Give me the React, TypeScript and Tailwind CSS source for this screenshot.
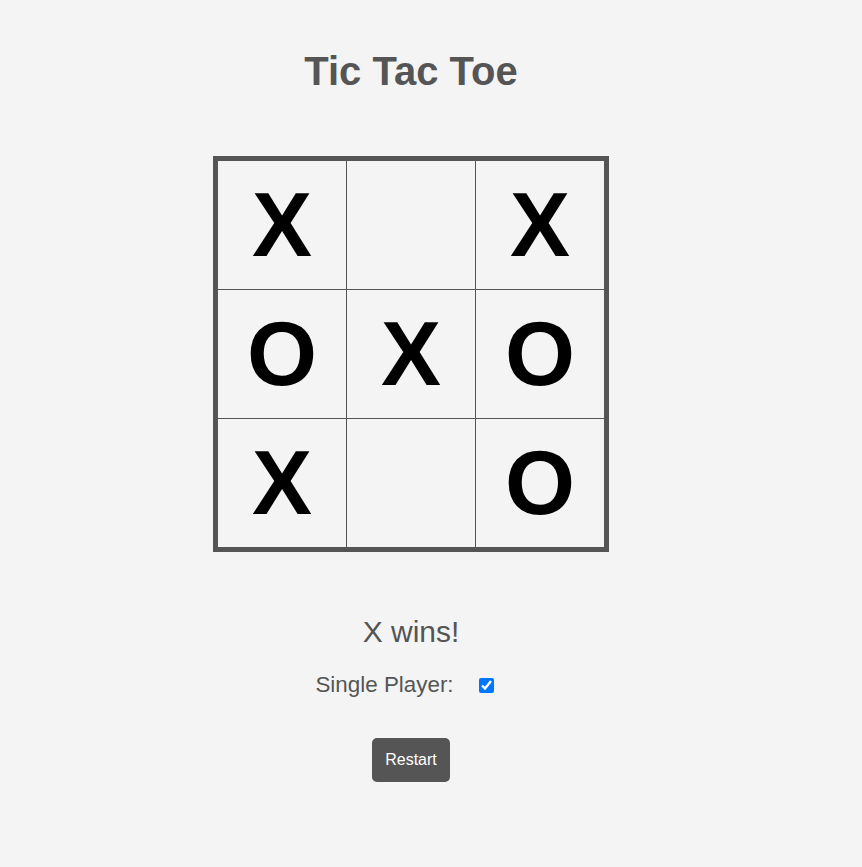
import { useState } from "react";

const initialBoard = ["X", "", "X", "O", "X", "O", "X", "", "O"];

export default function App() {
  const [board] = useState(initialBoard);
  const [single, setSingle] = useState(true);

  return (
    <div className="min-h-screen w-full bg-[#f4f4f4] font-['Liberation_Sans',Arial,sans-serif] text-[#555]">
      <div className="w-[822px] flex flex-col items-center pt-[49px]">
        <h1 className="text-[40px] leading-[45px] font-bold">Tic Tac Toe</h1>

        <div className="mt-[62px] border-[5px] border-[#555] bg-[#555]">
          <div className="grid grid-cols-[repeat(3,128px)] grid-rows-[repeat(3,128px)] gap-px">
            {board.map((cell, i) => (
              <div
                key={i}
                className="bg-[#f4f4f4] flex items-center justify-center text-[90px] leading-none font-bold text-black"
              >
                {cell}
              </div>
            ))}
          </div>
        </div>

        <div className="mt-[62px] text-[30px] leading-[35px]">X wins!</div>

        <div className="mt-[23px] flex items-center h-[26px]">
          <label htmlFor="single" className="text-[22.4px] leading-[26px]">
            Single Player:
          </label>
          <input
            id="single"
            type="checkbox"
            checked={single}
            onChange={() => setSingle(!single)}
            className="ml-[25px] mr-[13px] w-[15px] h-[15px] accent-[#0075ff]"
          />
        </div>

        <button className="mt-[40px] bg-[#555] text-white text-[16px] leading-5 px-[13px] py-[12px] rounded-[5px]">
          Restart
        </button>
      </div>
    </div>
  );
}
